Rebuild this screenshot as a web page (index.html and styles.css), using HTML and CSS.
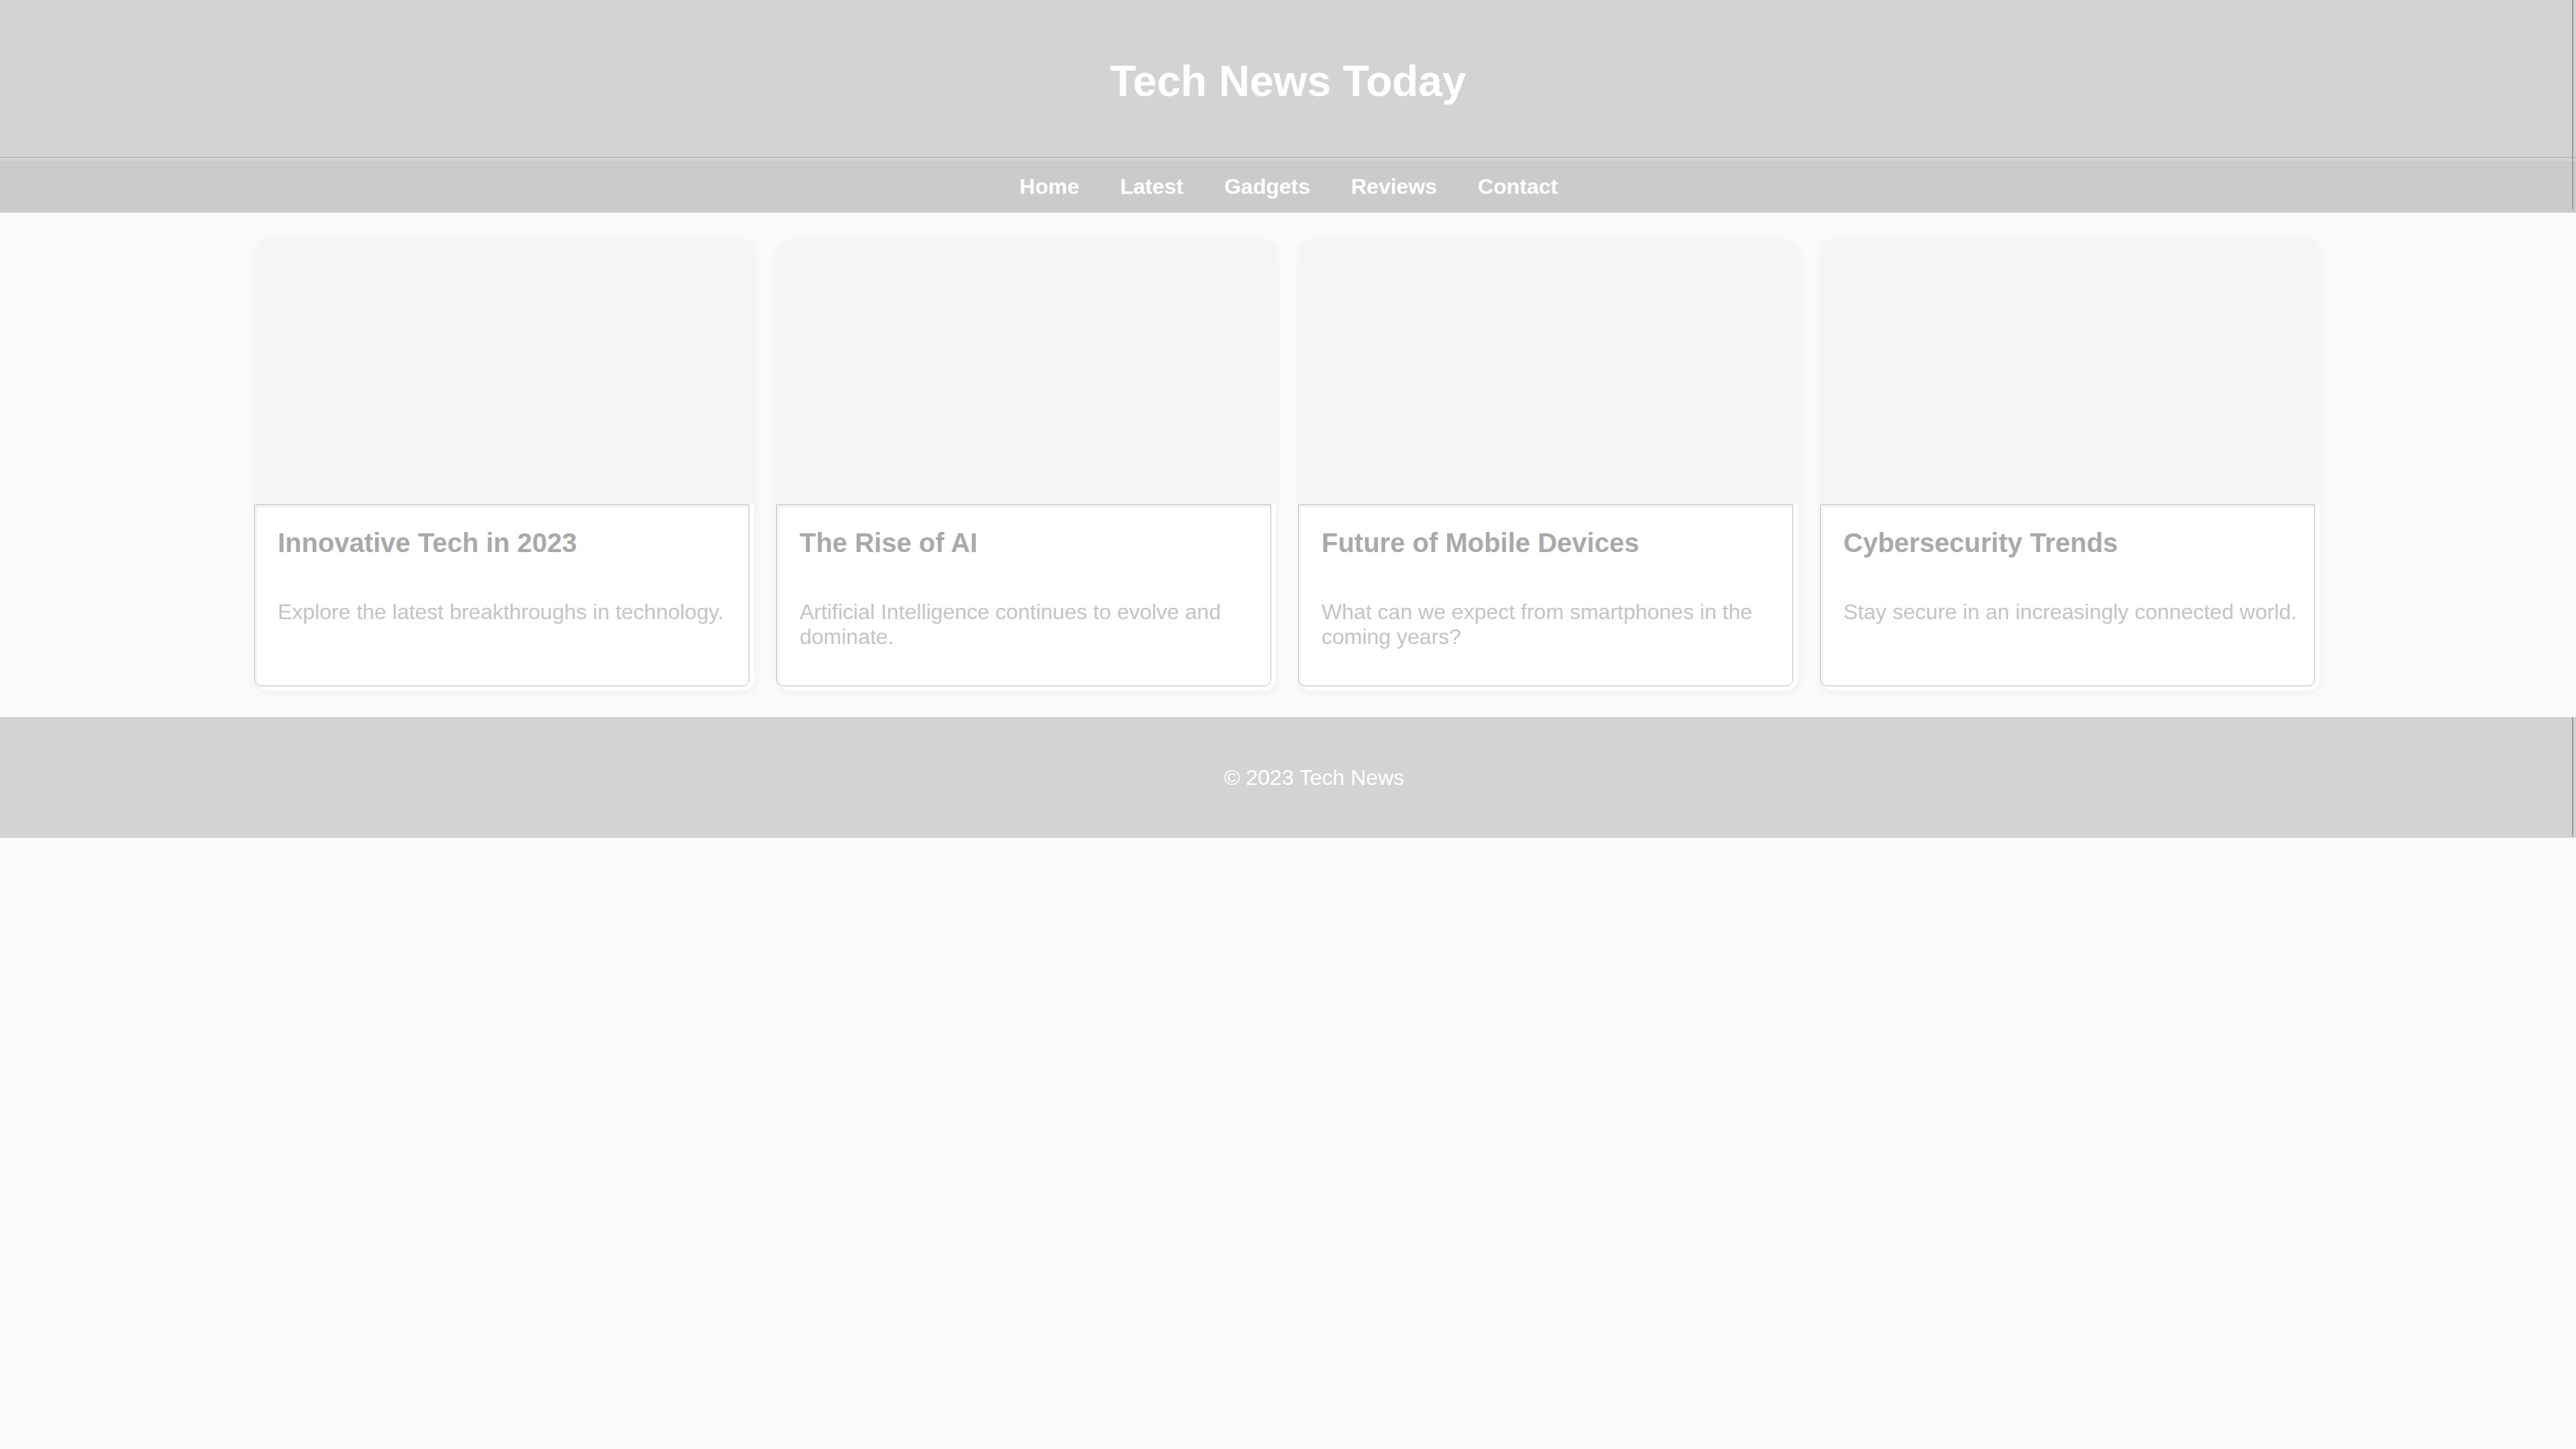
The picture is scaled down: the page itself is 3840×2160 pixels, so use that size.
FILE: index.html
```html
<!DOCTYPE html>
<html lang="en">
<head>
<meta charset="utf-8">
<title>Tech News Today</title>
<link rel="stylesheet" href="styles.css">
</head>
<body>
<div class="topbar">
  <header class="site-header">
    <h1 class="site-title">Tech News Today</h1>
  </header>
  <nav class="site-nav">
    <a class="nav-link" href="#">Home</a>
    <a class="nav-link" href="#">Latest</a>
    <a class="nav-link" href="#">Gadgets</a>
    <a class="nav-link" href="#">Reviews</a>
    <a class="nav-link" href="#">Contact</a>
  </nav>
</div>
<main class="content">
  <div class="card-grid">
    <article class="card">
      <div class="card-image"></div>
      <div class="card-body">
        <h3 class="card-title">Innovative Tech in 2023</h3>
        <p class="card-text">Explore the latest breakthroughs in technology.</p>
      </div>
    </article>
    <article class="card">
      <div class="card-image"></div>
      <div class="card-body">
        <h3 class="card-title">The Rise of AI</h3>
        <p class="card-text">Artificial Intelligence continues to evolve and dominate.</p>
      </div>
    </article>
    <article class="card">
      <div class="card-image"></div>
      <div class="card-body">
        <h3 class="card-title">Future of Mobile Devices</h3>
        <p class="card-text">What can we expect from smartphones in the coming years?</p>
      </div>
    </article>
    <article class="card">
      <div class="card-image"></div>
      <div class="card-body">
        <h3 class="card-title">Cybersecurity Trends</h3>
        <p class="card-text">Stay secure in an increasingly connected world.</p>
      </div>
    </article>
  </div>
</main>
<footer class="site-footer">
  <p class="footer-text">&copy; 2023 Tech News</p>
</footer>
</body>
</html>
```

FILE: styles.css
```css
html, body {
  margin: 0;
  padding: 0;
  background: #fafafa;
  font-family: "Liberation Sans", Arial, sans-serif;
}

.topbar {
  position: relative;
}

.topbar::after {
  content: "";
  position: absolute;
  top: 0;
  bottom: 5px;
  right: 4px;
  width: 2px;
  background: #9a9a9a;
}

.site-header {
  box-sizing: border-box;
  height: 235px;
  padding-top: 8px;
  background: #d3d3d3;
  border-bottom: 1px solid #aaaaaa;
  display: flex;
  align-items: center;
  justify-content: center;
}

.site-title {
  margin: 0;
  font-size: 64px;
  font-weight: bold;
  color: #ffffff;
}

.site-nav {
  background: #cbcbcb;
  border-top: 5px solid #d3d3d3;
  padding: 20px 0 20px 2px;
  display: flex;
  justify-content: center;
  gap: 61px;
}

.nav-link {
  color: #ffffff;
  font-size: 32px;
  font-weight: bold;
  text-decoration: none;
}

.content {
  padding: 40px 0;
}

.card-grid {
  width: 3076px;
  margin: 0 auto;
  display: grid;
  grid-template-columns: repeat(4, 1fr);
  gap: 36px;
}

.card {
  display: flex;
  flex-direction: column;
  background: #ffffff;
  border-radius: 16px;
  box-shadow: 0 4px 14px rgba(0, 0, 0, 0.05);
}

.card-image {
  height: 395px;
  background: #f5f5f5;
  border-radius: 16px 16px 0 0;
}

.card-body {
  flex: 1;
  margin: 0 7px 6px -3px;
  padding: 34px 24px 32px 34px;
  border: 1px solid #bdbdbd;
  border-radius: 0 0 10px 10px;
  background: #ffffff;
  box-shadow: inset 4px 4px 0 #f5f5f5;
}

.card-title {
  margin: 0 0 62px;
  font-size: 40px;
  font-weight: bold;
  color: #a9a9a9;
}

.card-text {
  margin: 0 0 22px;
  font-size: 32px;
  color: #c4c4c4;
}

.site-footer {
  position: relative;
  background: #d3d3d3;
  padding: 72px 0 71px 78px;
  text-align: center;
}

.site-footer::after {
  content: "";
  position: absolute;
  top: 0;
  bottom: 2px;
  right: 4px;
  width: 2px;
  background: #9a9a9a;
}

.footer-text {
  margin: 0;
  font-size: 32px;
  color: #ffffff;
}
```
